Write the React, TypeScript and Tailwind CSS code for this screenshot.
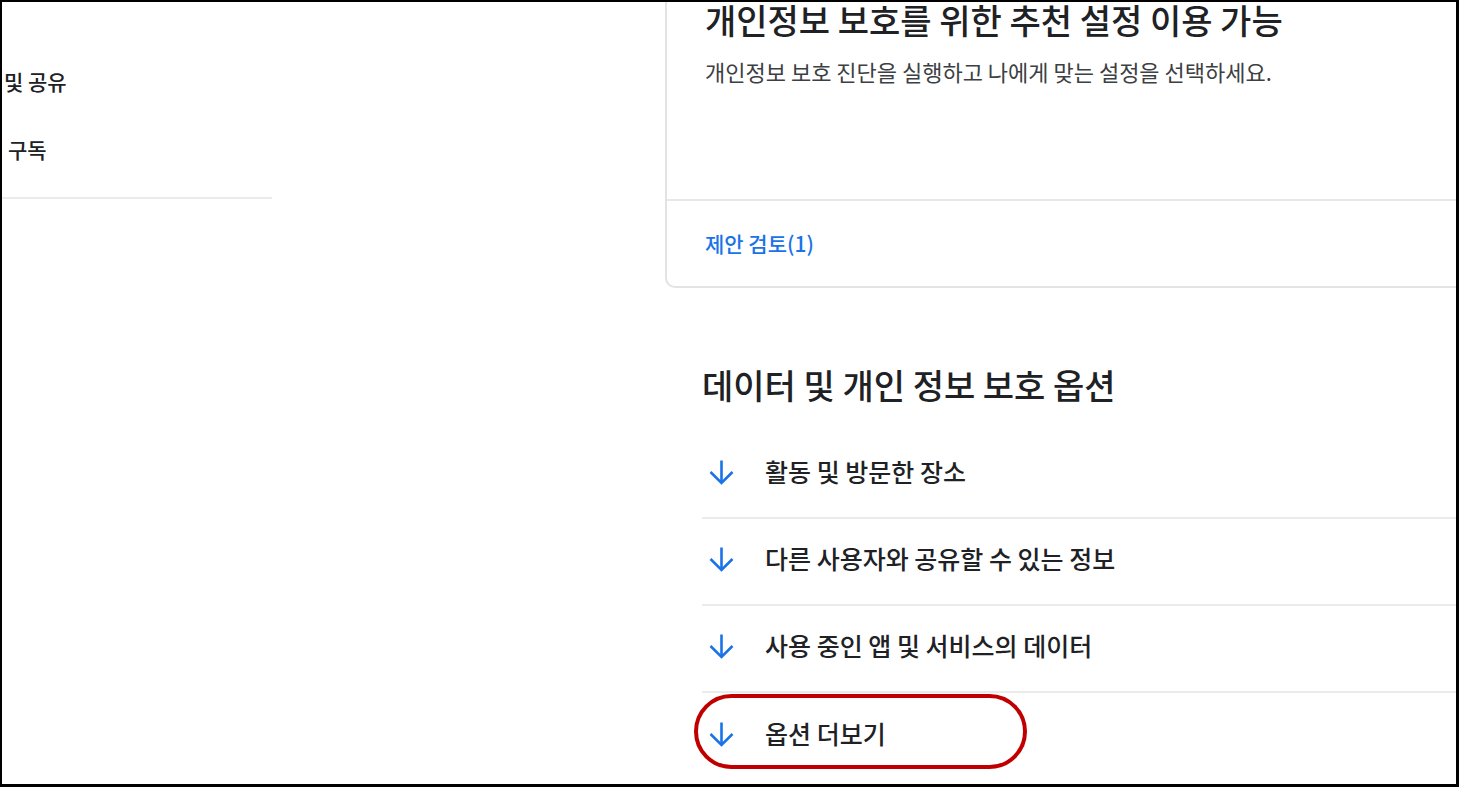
import React from "react";

const font = { fontFamily: "'Noto Sans CJK KR', 'Noto Sans', sans-serif" };

interface OptionRow {
    label: string;
}

const options: OptionRow[] = [
    { label: "활동 및 방문한 장소" },
    { label: "다른 사용자와 공유할 수 있는 정보" },
    { label: "사용 중인 앱 및 서비스의 데이터" },
    { label: "옵션 더보기" },
];

function ArrowDown() {
    return (
        <svg width="27" height="26" viewBox="0 0 27 26" fill="none" className="shrink-0">
            <path d="M13.5 1.5V23.5" stroke="#1a73e8" strokeWidth="2.6" />
            <path d="M2.5 13L13.5 24L24.5 13" stroke="#1a73e8" strokeWidth="2.6" />
        </svg>
    );
}

function Sidebar() {
    return (
        <aside className="w-[270px] shrink-0 flex flex-col">
            <div className="h-[46px]" />
            <div className="h-[68px] flex items-center pl-[2px] text-[21px] font-medium text-[#202124]">
                및 공유
            </div>
            <div className="h-[68px] flex items-center pl-[6px] text-[21px] font-medium text-[#202124]">
                구독
            </div>
            <div className="mt-[13px] h-[2px] bg-[#ebebeb]" />
        </aside>
    );
}

export default function App() {
    return (
        <div
            className="relative w-[1459px] h-[787px] overflow-hidden bg-white border-2 border-r-[3px] border-b-[3px] border-black flex"
            style={font}
        >
            <Sidebar />

            <main className="flex-1 flex flex-col pl-[393px] mr-[-40px]">
                {/* 추천 설정 카드 */}
                <section className="mt-[-40px] border-2 border-[#e3e3e3] rounded-[10px] flex flex-col">
                    <div className="h-[235px] pl-[38px] pt-[39px]">
                        <h2 className="text-[34px] leading-[34px] font-medium text-[#202124]">
                            개인정보 보호를 위한 추천 설정 이용 가능
                        </h2>
                        <p className="mt-[20px] text-[22px] leading-[28px] text-[#3c4043]">
                            개인정보 보호 진단을 실행하고 나에게 맞는 설정을 선택하세요.
                        </p>
                    </div>
                    <div className="h-[87px] border-t-2 border-[#e8e8e8] pl-[38px] flex items-center">
                        <span className="text-[21px] font-medium text-[#1a73e8]">제안 검토(1)</span>
                    </div>
                </section>

                {/* 데이터 및 개인 정보 보호 옵션 */}
                <section className="pl-[37px] pt-[76px]">
                    <h2 className="text-[34px] leading-[42px] font-medium text-[#202124]">
                        데이터 및 개인 정보 보호 옵션
                    </h2>
                    <ul className="mt-[26px]">
                        {options.map(({ label }, i) => (
                            <li
                                key={label}
                                className={
                                    "h-[87px] pb-[6px] flex items-center " +
                                    (i < options.length - 1 ? "border-b-2 border-[#ebebeb]" : "")
                                }
                            >
                                <div className="w-[63px] pl-[6px]">
                                    <ArrowDown />
                                </div>
                                <span className="text-[25px] font-medium text-[#202124]">{label}</span>
                            </li>
                        ))}
                    </ul>
                </section>
            </main>

            {/* 강조 표시 */}
            <div className="absolute left-[692px] top-[692px] w-[333px] h-[75px] rounded-full border-4 border-[#c00000]" />
        </div>
    );
}
